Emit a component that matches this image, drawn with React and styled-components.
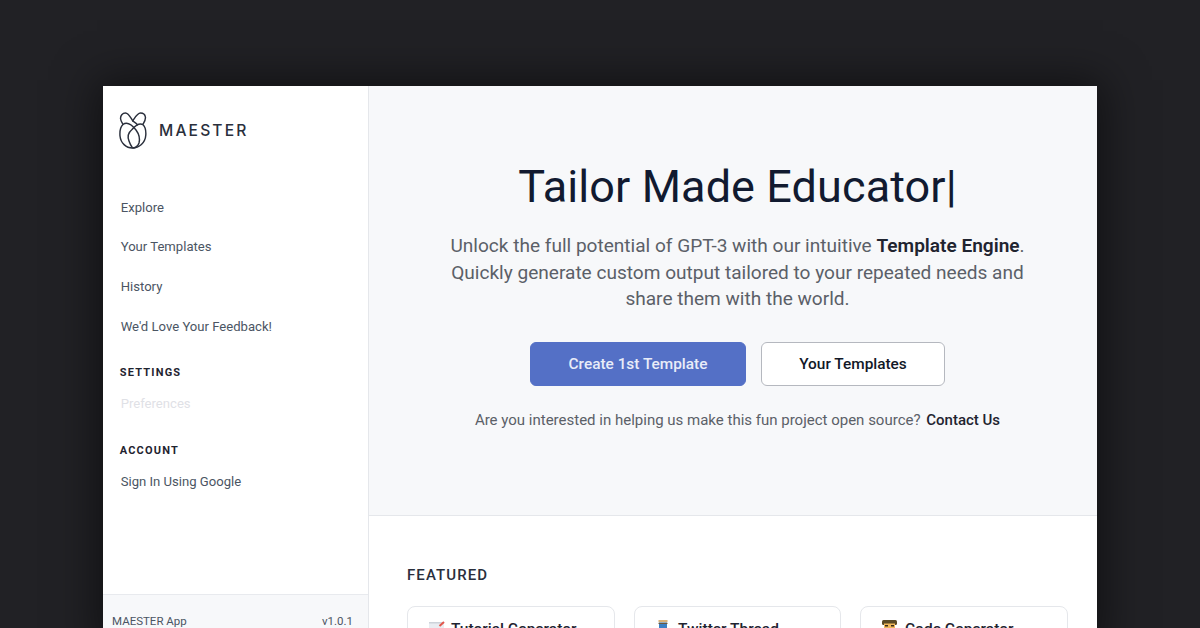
import React from "react";
import styled, { createGlobalStyle } from "styled-components";

const Global = createGlobalStyle`
  html, body { margin: 0; padding: 0; height: 628px; overflow: hidden; background: #212125; }
  body { font-family: Roboto, "Liberation Sans", sans-serif; }
  * { box-sizing: border-box; }
`;

const Page = styled.div`
  width: 1200px;
  height: 628px;
  overflow: hidden;
  padding: 86px 103px 0;
  background: #212125;
`;
const Frame = styled.div`
  width: 994px;
  height: 560px;
  display: flex;
  background: #fff;
  box-shadow: 0 0 40px 6px rgba(0, 0, 0, 0.5);
`;
const Sidebar = styled.aside`
  width: 266px;
  flex: none;
  display: flex;
  flex-direction: column;
  border-right: 1px solid #e5e7eb;
  background: #fff;
`;
const Brand = styled.div`
  display: flex;
  align-items: center;
  gap: 12px;
  padding-left: 16px;
  height: 88px;
`;
const BrandName = styled.span`
  font-family: Inter, Roboto, sans-serif;
  font-size: 15.6px;
  font-weight: 500;
  letter-spacing: 2.15px;
  color: #2a2f3c;
`;
const Nav = styled.nav`
  display: flex;
  flex-direction: column;
  padding: 13.2px 0 0 17.7px;
`;
const NavItem = styled.a`
  height: ${(p) => p.$h || 39.7}px;
  display: flex;
  align-items: center;
  font-size: 13.1px;
  color: ${(p) => (p.$disabled ? "#dfe1e6" : "#4b5563")};
`;
const SectionTitle = styled.div`
  font-size: 11px;
  font-weight: 700;
  letter-spacing: 1.2px;
  color: #1f2430;
  height: 16px;
  line-height: 16px;
  margin-left: -1px;
  margin-top: ${(p) => p.$mt}px;
  margin-bottom: ${(p) => p.$mb}px;
`;
const SideFooter = styled.div`
  margin-top: auto;
  height: 52px;
  padding: 18px 15px 0 9px;
  display: flex;
  justify-content: space-between;
  font-size: 11.5px;
  line-height: 16px;
  color: #4b5563;
  background: #f7f8fa;
  border-top: 1px solid #e8eaee;
`;
const Main = styled.main`
  flex: 1;
  min-width: 0;
  display: flex;
  flex-direction: column;
`;
const Hero = styled.section`
  height: 430px;
  flex: none;
  background: #f7f8fa;
  border-bottom: 1px solid #e5e7eb;
  display: flex;
  flex-direction: column;
  align-items: center;
  padding: 69px 0 0 9px;
`;
const Title = styled.h1`
  margin: 0;
  font-size: 45px;
  line-height: 64px;
  font-weight: 400;
  color: #111a30;
  letter-spacing: 0.1px;
`;
const Lead = styled.p`
  margin: 14px 0 0;
  width: 600px;
  text-align: center;
  font-size: 19.07px;
  line-height: 26.5px;
  font-weight: 400;
  color: #5b6068;
  b { font-weight: 560; color: #1f2430; }
`;
const Actions = styled.div`
  display: flex;
  gap: 15px;
  margin-top: 29px;
`;
const Button = styled.button`
  height: 44px;
  width: ${(p) => p.$w}px;
  border-radius: 6px;
  font-family: Roboto, sans-serif;
  font-size: 15.4px;
  font-weight: 500;
  border: 1px solid ${(p) => (p.$primary ? "#5470c6" : "#b5b8bf")};
  background: ${(p) => (p.$primary ? "#5470c6" : "#fff")};
  color: ${(p) => (p.$primary ? "#e8ecf8" : "#111827")};
`;
const Note = styled.p`
  margin: 23px 0 0;
  font-size: 15px;
  line-height: 22px;
  color: #5b6068;
  b { font-weight: 500; color: #1f2430; margin-left: 2px; }
`;
const Featured = styled.section`
  flex: 1;
  background: #fff;
  padding: 50px 29px 0 38px;
`;
const FeaturedTitle = styled.h2`
  margin: 0 0 21px;
  font-size: 15px;
  line-height: 19px;
  font-weight: 500;
  letter-spacing: 1.1px;
  color: #2a2f3c;
`;
const Cards = styled.div`
  display: grid;
  grid-template-columns: 208px 207px 208px;
  column-gap: 19px;
`;
const Card = styled.div`
  height: 90px;
  border: 1px solid #e5e7eb;
  border-radius: 8px;
  padding: 12px 0 0 ${(p) => p.$pad}px;
  display: flex;
  align-items: flex-start;
  gap: 6px;
  font-size: 15.5px;
  line-height: 20px;
  font-weight: 500;
  color: #1f2430;
  svg { flex: none; margin-top: 1px; }
`;

const Logo = () => (
  <svg width="28" height="37" viewBox="0 0 28 37" fill="none" stroke="#2a2f3c" strokeWidth="1.45">
    <path d="M13.7 8.8C11.5 5.5 9.5 1 6.5 1C3.5 1 1.2 3.5 1.6 7C2 10 4 11.5 4 12.5C1.2 15 0.7 20 1 24C1.7 31 7 36 13.5 36C20 36 26.3 31 26.8 23C27.1 18 26 14.5 23.8 12.5C25.2 10 26.8 8 26.4 5C26 2.5 24 1 21.5 1C18.5 1 16 5.5 13.7 8.8Z" />
    <path d="M4 12.5C8 9.5 13 13 17 18C20 22 21 27 20 31C19 34.5 15.5 36 13.5 36" />
    <path d="M23.8 12.5C20 11 16 14 13 17.5C10 20 8 24 10 29C11 32 12.5 34.5 13.5 36" />
    <path d="M13.7 8.8C15.5 10 17.5 11.5 19 13.2" />
  </svg>
);
const MemoIcon = () => (
  <svg width="18" height="18" viewBox="0 0 18 18">
    <rect x="2" y="2" width="15" height="16" fill="#e9edf2" />
    <rect x="2" y="2" width="15" height="1.5" fill="#cdd3da" />
    <path d="M12.5 6L17 2" stroke="#e2574c" strokeWidth="2" />
  </svg>
);
const SpoolIcon = () => (
  <svg width="18" height="18" viewBox="0 0 18 18">
    <rect x="4.5" y="0" width="9" height="2.5" fill="#d9b27a" />
    <rect x="5" y="2.5" width="8" height="14" fill="#3b7fc4" />
    <rect x="4.5" y="3" width="9" height="1" fill="#6b5a40" />
  </svg>
);
const CoderIcon = () => (
  <svg width="18" height="18" viewBox="0 0 18 18">
    <rect x="1" y="0" width="15" height="5" rx="1.5" fill="#5a4a25" />
    <rect x="3" y="3.5" width="11" height="10" fill="#f0b85a" />
    <rect x="4" y="5" width="3" height="1.5" fill="#3a2c18" />
    <rect x="10" y="5" width="3" height="1.5" fill="#3a2c18" />
  </svg>
);

export default function App() {
  return (
    <Page>
      <Global />
      <Frame>
        <Sidebar>
          <Brand>
            <Logo />
            <BrandName>MAESTER</BrandName>
          </Brand>
          <Nav>
            <NavItem>Explore</NavItem>
            <NavItem>Your Templates</NavItem>
            <NavItem>History</NavItem>
            <NavItem>We'd Love Your Feedback!</NavItem>
            <SectionTitle $mt={18.8} $mb={7}>SETTINGS</SectionTitle>
            <NavItem $h={32} $disabled>Preferences</NavItem>
            <SectionTitle $mt={23.5} $mb={6.5}>ACCOUNT</SectionTitle>
            <NavItem $h={32}>Sign In Using Google</NavItem>
          </Nav>
          <SideFooter>
            <span>MAESTER App</span>
            <span>v1.0.1</span>
          </SideFooter>
        </Sidebar>
        <Main>
          <Hero>
            <Title>Tailor Made Educator|</Title>
            <Lead>
              Unlock the full potential of GPT-3 with our intuitive <b>Template Engine</b>. Quickly generate custom output tailored to your repeated needs and share them with the world.
            </Lead>
            <Actions>
              <Button $primary $w={216}>Create 1st Template</Button>
              <Button $w={184}>Your Templates</Button>
            </Actions>
            <Note>
              Are you interested in helping us make this fun project open source? <b>Contact Us</b>
            </Note>
          </Hero>
          <Featured>
            <FeaturedTitle>FEATURED</FeaturedTitle>
            <Cards>
              <Card $pad={19}><MemoIcon />Tutorial Generator</Card>
              <Card $pad={19}><SpoolIcon />Twitter Thread</Card>
              <Card $pad={20}><CoderIcon />Code Generator</Card>
            </Cards>
          </Featured>
        </Main>
      </Frame>
    </Page>
  );
}
